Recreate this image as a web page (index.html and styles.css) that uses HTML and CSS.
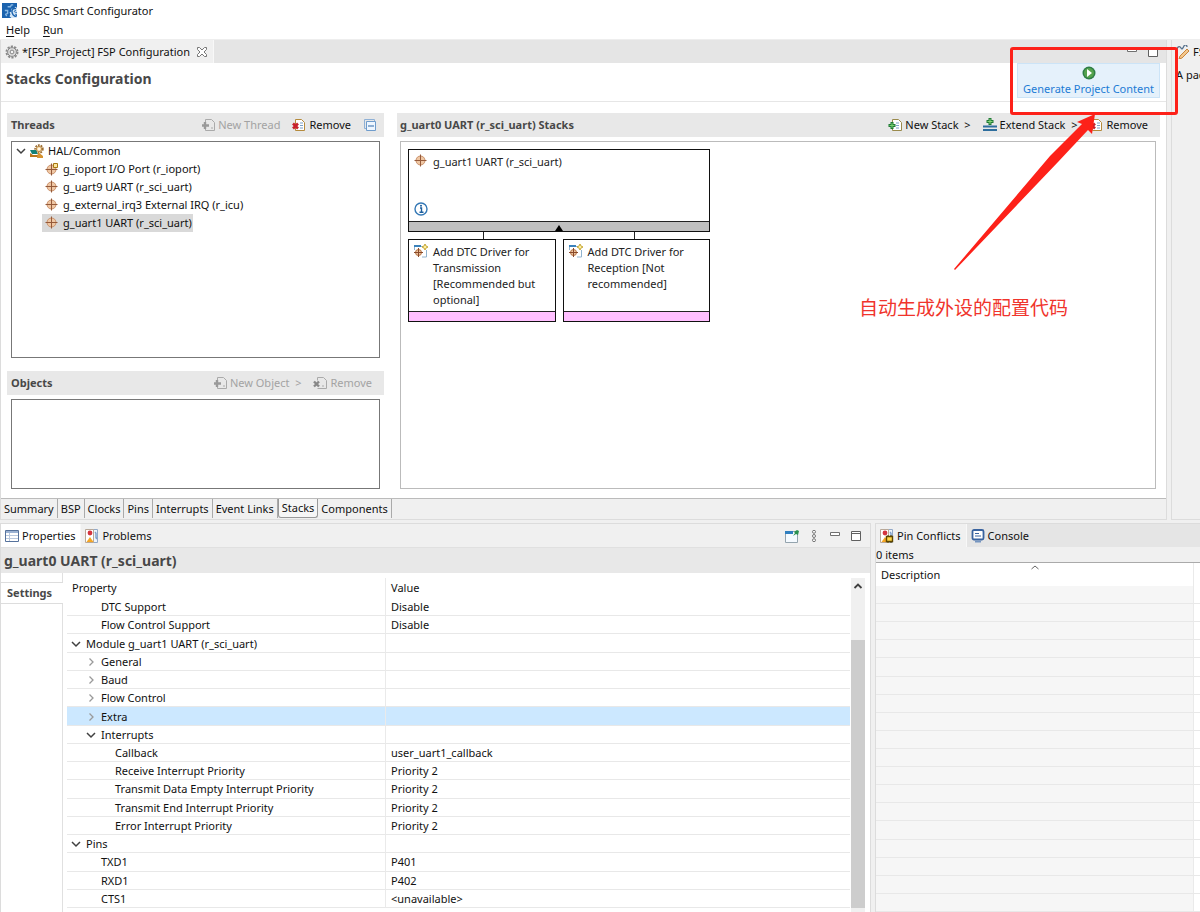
FILE: index.html
```
<!DOCTYPE html>
<html lang="en">
<head>
<meta charset="utf-8">
<title>DDSC Smart Configurator</title>
<link rel="stylesheet" href="styles.css">
</head>
<body>
<svg class="defs" aria-hidden="true">
  <symbol id="i-gear" viewBox="0 0 14 14"><circle cx="7" cy="7" r="5.6" fill="none" stroke="#888" stroke-width="1.8" stroke-dasharray="2.2 1.3"/><circle cx="7" cy="7" r="4.4" fill="#ddd" stroke="#858585"/><circle cx="7" cy="7" r="1.9" fill="#f4f4f4" stroke="#858585"/></symbol>
  <symbol id="i-module" viewBox="0 0 14 14"><circle cx="6.500" cy="6.500" r="4.500" fill="#efc7a4" stroke="#c99069"/><path d="M6.500 .5v12M.5 6.500h12" stroke="#955a3a"/></symbol>
  <symbol id="i-ioport" viewBox="0 0 14 14"><circle cx="6.500" cy="7.500" r="4.500" fill="#efc7a4" stroke="#c99069"/><path d="M6.500 1.500v12M.5 7.500h12" stroke="#955a3a"/><path d="M8.500 1.500h4v4h-4z" fill="#fbe7a0" stroke="#a87812"/></symbol>
  <symbol id="i-hal" viewBox="0 0 14 14"><circle cx="9" cy="5" r="3.900" fill="none" stroke="#9a6a2c" stroke-width="1.600" stroke-dasharray="1.800 1"/><circle cx="9" cy="5" r="2.700" fill="#f5dca8" stroke="#b98a4c"/><circle cx="9" cy="5" r="1" fill="#fff"/><path d="M0 6h6l2 4H2z" fill="#128076"/><path d="M0 9l3 2h9v2H0z" fill="#b8741b"/><path d="M8 8l5 4v2H7z" fill="#d69331"/></symbol>
  <symbol id="i-new" viewBox="0 0 14 14"><path d="M4.500 1.500h6l3 3v8h-9z" fill="#fff" stroke="currentColor"/><path d="M8 5h3M8 7.500h3M8 10h3" stroke="#7aa0c8"/><path d="M4 4v7M0.500 7.500h7" stroke="#1f7a35" stroke-width="3"/><path d="M4 5v5M1.500 7.500h5" stroke="#79cf70"/></symbol>
  <symbol id="i-remove" viewBox="0 0 14 14"><path d="M3.500 1.500h6l3 3v8h-9z" fill="#fff" stroke="#b58a3c"/><path d="M8 5h3M8 7.500h3M8 10h3" stroke="#7aa0c8"/><path d="M1 5.500l5 5M6 5.500l-5 5" stroke="#c8202c" stroke-width="2.600"/></symbol>
  <symbol id="i-new-off" viewBox="0 0 14 14"><path d="M4.500 4.500v-3h6l3 3v8h-9v-2" fill="none" stroke="#aaa"/><path d="M4 4v7M1 7.500h7" stroke="#999" stroke-width="2.400"/><path d="M10 10h2" stroke="#aaa"/></symbol>
  <symbol id="i-remove-off" viewBox="0 0 14 14"><path d="M4.500 4.500v-3h6l3 3v8h-9" fill="none" stroke="#aaa"/><path d="M1 5.500l5 5M6 5.500l-5 5" stroke="#888" stroke-width="2.400"/><path d="M9 10h2" stroke="#aaa"/></symbol>
  <symbol id="i-driver" viewBox="0 0 14 14"><path d="M1.500 2.500H9M12.500 6v7H8" fill="none" stroke="#90b3cf"/><path d="M0 1h7v2H0z" fill="#3b82bb"/><path d="M.5 3v3" stroke="#90b3cf"/><circle cx="4.500" cy="8.500" r="3" fill="#efc7a4" stroke="#b5703f"/><path d="M4.500 4v9M0 8.500h9" stroke="#8a4a2a"/><path d="M11 0l1 2 2 1-2 1-1 2-1-2-2-1 2-1z" fill="#fff0a0" stroke="#b99518" stroke-width=".8"/></symbol>
  <symbol id="i-min" viewBox="0 0 12 12"><path d="M1.500 2.500h9v3h-9z" fill="#fff" stroke="#707070"/></symbol>
  <symbol id="i-max" viewBox="0 0 12 12"><path d="M1.500 1.500h9v9h-9zM1.500 3.500h9" fill="#fff" stroke="#606060"/></symbol>
  <symbol id="i-down" viewBox="0 0 10 10"><path d="M1 3l4 4 4-4" fill="none" stroke="#404040" stroke-width="1.500"/></symbol>
  <symbol id="i-right" viewBox="0 0 10 10"><path d="M3.500 1.500L7 5 3.500 8.500" fill="none" stroke="#9a9a9a" stroke-width="1.300"/></symbol>
  <symbol id="i-problems" viewBox="0 0 14 14"><path d="M1.500.5h11v13h-11z" fill="#eef4fb" stroke="#92a9c8"/><path d="M.5.500h8v13h-8z" fill="#fff" stroke="#b8a898"/><circle cx="5" cy="4" r="2.400" fill="#d4343f"/><path d="M5 8l3.500 5h-7z" fill="#f5a623"/><path d="M10 3c3 2-1 4 2 7" fill="none" stroke="#7da0cd" stroke-width="1.500"/></symbol>
</svg>

<div class="app">
  <header class="titlebar">
    <svg class="icon logo" viewBox="0 0 16 16"><path d="M0 0h16v16H0z" fill="#1c63ae"/><path d="M16 0v5l-2-1-1 2-3 0 0 3-2 1 1 2-1 2 2 2h6z" fill="#d7e8f7"/><path d="M15 6c-4-1-5 2-4 5s4 4 5 2" fill="none" stroke="#1c63ae" stroke-width="1.500"/><path d="M15 8c-3 0-2 2 0 2s2 3-1 2" fill="none" stroke="#1c63ae"/><path d="M6 4h3l1-2h2M3 8h3v3l-2 1 1 2" fill="none" stroke="#8bb9e3" stroke-width="1.500"/></svg>
    <span>DDSC Smart Configurator</span>
  </header>
  <nav class="menubar"><button type="button"><span><u>H</u>elp</span></button><button type="button"><span><u>R</u>un</span></button></nav>

  <div class="upper">
    <section class="editor">
      <div class="tabstrip">
        <button type="button" class="tab file-tab"><svg class="icon"><use href="#i-gear"/></svg>*[FSP_Project] FSP Configuration
          <svg class="close" viewBox="0 0 12 12"><path d="M1.500 1.500h2L6 4l2.500-2.500h2v2L8 6l2.500 2.500v2h-2L6 8l-2.500 2.500h-2v-2L4 6 1.500 3.500z" fill="#fff" stroke="#777"/></svg></button>
        <div class="window-tools"><svg><use href="#i-min"/></svg><svg><use href="#i-max"/></svg></div>
      </div>
      <div class="form-head">
        <h1>Stacks Configuration</h1>
        <div class="generate-wrap">
          <button type="button" class="generate"><svg class="icon" viewBox="0 0 14 14"><circle cx="7" cy="7" r="6.500" fill="#2e7d46"/><circle cx="7" cy="7" r="5" fill="#56a34d"/><path d="M5 3l5 4-5 4z" fill="#fff"/></svg>Generate Project Content</button>
          <div class="callout"></div>
          <svg class="arrow" viewBox="0 0 142 156"><path d="M0 155L96 42 128 10l-5-2L141 0l-3 20-4-4L104 48 1 156z" fill="#fd2119"/></svg>
          <p class="note">自动生成外设的配置代码</p>
        </div>
      </div>
      <div class="form-body">
        <div class="left-col">
          <div class="section-bar"><h2>Threads</h2>
            <button type="button" disabled><svg class="icon"><use href="#i-new-off"/></svg>New Thread</button>
            <button type="button"><svg class="icon"><use href="#i-remove"/></svg>Remove</button>
            <button type="button" aria-label="Collapse all"><svg class="icon" viewBox="0 0 14 14"><path d="M3.500 10.500h-2v-9h10v2" fill="none" stroke="#8fb1d6"/><path d="M3.500 3.500h9v9h-9z" fill="#eef6ff" stroke="#6f9ccc"/><path d="M5 8h6" stroke="#2f69a8"/></svg></button>
          </div>
          <ul class="box tree">
            <li class="root"><svg class="chev"><use href="#i-down"/></svg><svg class="icon"><use href="#i-hal"/></svg><span>HAL/Common</span></li>
            <li><svg class="icon"><use href="#i-ioport"/></svg><span>g_ioport I/O Port (r_ioport)</span></li>
            <li><svg class="icon"><use href="#i-module"/></svg><span>g_uart9 UART (r_sci_uart)</span></li>
            <li><svg class="icon"><use href="#i-module"/></svg><span>g_external_irq3 External IRQ (r_icu)</span></li>
            <li class="selected"><svg class="icon"><use href="#i-module"/></svg><span>g_uart1 UART (r_sci_uart)</span></li>
          </ul>
          <div class="section-bar object-bar"><h2>Objects</h2>
            <button type="button" disabled><svg class="icon"><use href="#i-new-off"/></svg>New Object &nbsp;&gt;</button>
            <button type="button" disabled><svg class="icon"><use href="#i-remove-off"/></svg>Remove</button>
          </div>
          <div class="box objects"></div>
        </div>
        <div class="right-col">
          <div class="section-bar stack-bar"><h2>g_uart0 UART (r_sci_uart) Stacks</h2>
            <button type="button"><svg class="icon olive"><use href="#i-new"/></svg>New Stack &nbsp;&gt;</button>
            <button type="button"><svg class="icon" viewBox="0 0 14 14"><path d="M0 8.500h14M0 12h14" stroke="#2e6e9e" stroke-width="2"/><path d="M7 0v7M3.500 3.500h7" stroke="#1f7a35" stroke-width="3"/><path d="M7 1v5M4.500 3.500h5" stroke="#8ad67b"/></svg>Extend Stack &nbsp;&gt;</button>
            <button type="button"><svg class="icon"><use href="#i-remove"/></svg>Remove</button>
          </div>
          <div class="box canvas">
            <div class="diagram">
              <div class="node main">
                <div class="node-text"><svg class="icon"><use href="#i-module"/></svg><span>g_uart1 UART (r_sci_uart)</span></div>
                <svg class="icon info" viewBox="0 0 14 14"><circle cx="7" cy="7" r="6" fill="#fff" stroke="#3478b5" stroke-width="1.400"/><path d="M6 6h1.500v4M5.500 10.300h4" fill="none" stroke="#1d5e9c" stroke-width="1.400"/><circle cx="7" cy="3.700" r="1" fill="#1d5e9c"/></svg>
                <div class="node-foot grey"><svg viewBox="0 0 8 6"><path d="M4 0l4 6H0z"/></svg></div>
              </div>
              <div class="links"><i></i><i></i></div>
              <div class="children">
                <div class="node"><div class="node-text"><svg class="icon"><use href="#i-driver"/></svg><span>Add DTC Driver for Transmission [Recommended but optional]</span></div><div class="node-foot pink"></div></div>
                <div class="node"><div class="node-text"><svg class="icon"><use href="#i-driver"/></svg><span>Add DTC Driver for Reception [Not recommended]</span></div><div class="node-foot pink"></div></div>
              </div>
            </div>
          </div>
        </div>
      </div>
      <div class="page-tabs">
        <button type="button">Summary</button><button type="button">BSP</button><button type="button">Clocks</button><button type="button">Pins</button><button type="button">Interrupts</button><button type="button">Event Links</button><button type="button" class="on">Stacks</button><button type="button">Components</button>
      </div>
    </section>
    <aside class="visual">
      <div class="tabstrip"><button type="button" class="tab"><svg class="icon" viewBox="0 0 14 14"><path d="M1 4c1-3 3-3 4-1s2 0 3-2 3-1 3 1" fill="none" stroke="#55708c" stroke-width="1.300"/><path d="M11 4l2 2-7 7-3 1 1-3z" fill="#f3c78d" stroke="#c8843c"/></svg>FSP Visualization</button></div>
      <p>A package is not selected</p>
    </aside>
  </div>

  <div class="lower">
    <section class="props">
      <div class="tabstrip light">
        <button type="button" class="tab white"><svg class="icon" viewBox="0 0 14 14"><path d="M.5 1.500h13v11H.5z" fill="#fff" stroke="#56729c"/><path d="M1 2h12v2H1z" fill="#9bb2d3"/><path d="M4.500 4v8M1 6.500h12M1 9.500h12" stroke="#b9c8de"/></svg>Properties</button>
        <button type="button" class="tab plain"><svg class="icon"><use href="#i-problems"/></svg>Problems</button>
        <div class="window-tools wide">
          <svg class="icon" viewBox="0 0 14 14"><path d="M.5 2.500h12v11H.5z" fill="#f5faff" stroke="#94a4ae"/><path d="M0 2h8v3H0z" fill="#2f7fc0"/><path d="M8 7l2-3-1-1 3-2 2 1-1 4-2-1z" fill="#2a9150"/></svg>
          <svg viewBox="0 0 12 12"><g fill="#fff" stroke="#777"><circle cx="6" cy="1.800" r="1.500"/><circle cx="6" cy="6" r="1.500"/><circle cx="6" cy="10.200" r="1.500"/></g></svg>
          <svg><use href="#i-min"/></svg><svg><use href="#i-max"/></svg>
        </div>
      </div>
      <h2 class="props-title">g_uart0 UART (r_sci_uart)</h2>
      <div class="props-body">
        <div class="side"><button type="button">Settings</button></div>
        <div class="table-wrap">
          <table class="grid">
            <thead><tr><th>Property</th><th>Value</th></tr></thead>
            <tbody>
              <tr><td class="d2">DTC Support</td><td>Disable</td></tr>
              <tr><td class="d2">Flow Control Support</td><td>Disable</td></tr>
              <tr><td class="d1"><svg class="chev"><use href="#i-down"/></svg>Module g_uart1 UART (r_sci_uart)</td><td></td></tr>
              <tr><td class="d2"><svg class="chev"><use href="#i-right"/></svg>General</td><td></td></tr>
              <tr><td class="d2"><svg class="chev"><use href="#i-right"/></svg>Baud</td><td></td></tr>
              <tr><td class="d2"><svg class="chev"><use href="#i-right"/></svg>Flow Control</td><td></td></tr>
              <tr class="selected"><td class="d2"><svg class="chev"><use href="#i-right"/></svg>Extra</td><td></td></tr>
              <tr><td class="d2"><svg class="chev"><use href="#i-down"/></svg>Interrupts</td><td></td></tr>
              <tr><td class="d3">Callback</td><td>user_uart1_callback</td></tr>
              <tr><td class="d3">Receive Interrupt Priority</td><td>Priority 2</td></tr>
              <tr><td class="d3">Transmit Data Empty Interrupt Priority</td><td>Priority 2</td></tr>
              <tr><td class="d3">Transmit End Interrupt Priority</td><td>Priority 2</td></tr>
              <tr><td class="d3">Error Interrupt Priority</td><td>Priority 2</td></tr>
              <tr><td class="d1"><svg class="chev"><use href="#i-down"/></svg>Pins</td><td></td></tr>
              <tr><td class="d2">TXD1</td><td>P401</td></tr>
              <tr><td class="d2">RXD1</td><td>P402</td></tr>
              <tr><td class="d2">CTS1</td><td>&lt;unavailable&gt;</td></tr>
            </tbody>
          </table>
          <div class="scroll"><svg class="chev" viewBox="0 0 10 10"><path d="M1.500 7L5 3.500 8.500 7" fill="none" stroke="#404040" stroke-width="1.800"/></svg><div class="thumb"></div></div>
        </div>
      </div>
    </section>
    <section class="conflicts">
      <div class="tabstrip">
        <button type="button" class="tab"><svg class="icon" viewBox="0 0 14 14"><use href="#i-problems"/><path d="M6.500 7.500h6v5h-6z" fill="#ffd84a" stroke="#5d4500" stroke-width="1.400"/><path d="M8 6v1M11 6v1M8 13v1M11 13v1" stroke="#5d4500"/></svg>Pin Conflicts</button>
        <button type="button" class="tab plain"><svg class="icon" viewBox="0 0 14 14"><rect x="1.500" y="1" width="11" height="9.500" rx="1.500" fill="#fff" stroke="#39639f" stroke-width="1.800"/><path d="M4 4.500h4M4 7h6" stroke="#39639f"/><path d="M4 12.500h6" stroke="#7595c0" stroke-width="2"/></svg>Console</button>
      </div>
      <p class="count">0 items</p>
      <table class="grid empty">
        <thead><tr><th>Description<svg class="chev sort" viewBox="0 0 10 10"><path d="M1.500 6L5 3l3.500 3" fill="none" stroke="#666"/></svg></th><th></th></tr></thead>
        <tbody>
          <tr><td></td><td></td></tr><tr><td></td><td></td></tr><tr><td></td><td></td></tr><tr><td></td><td></td></tr><tr><td></td><td></td></tr><tr><td></td><td></td></tr>
          <tr><td></td><td></td></tr><tr><td></td><td></td></tr><tr><td></td><td></td></tr><tr><td></td><td></td></tr><tr><td></td><td></td></tr><tr><td></td><td></td></tr>
          <tr><td></td><td></td></tr><tr><td></td><td></td></tr><tr><td></td><td></td></tr><tr><td></td><td></td></tr><tr><td></td><td></td></tr><tr><td></td><td></td></tr>
        </tbody>
      </table>
    </section>
  </div>
</div>
</body>
</html>
```
FILE: styles.css
```
* { box-sizing: border-box; }
body { margin: 0; background: #f0f0f0; color: #111; font: 11px/18px "Noto Sans", "Noto Sans CJK SC", sans-serif; }
button { border: 0; margin: 0; padding: 0; background: none; color: inherit; font: inherit; white-space: nowrap; display: flex; align-items: center; gap: 3px; }
h1, h2, p, ul { margin: 0; padding: 0; }
svg { display: block; flex: none; }
.defs { position: absolute; width: 0; height: 0; }
.icon { width: 14px; height: 14px; }
.chev { width: 10px; height: 10px; }
.olive { color: #9a8a4c; }
.app { height: 100vh; display: flex; flex-direction: column; overflow: hidden; }

.titlebar { background: #fff; height: 21px; display: flex; align-items: center; gap: 4px; padding-left: 2px; }
.logo { width: 15px; height: 15px; }
.menubar { background: #fff; height: 19px; display: flex; gap: 13px; padding-left: 6px; border-bottom: 1px solid #eee; }
u { text-underline-offset: 2px; }

.upper { display: flex; flex: none; height: 480px; }
.editor { flex: 1; min-width: 0; display: flex; flex-direction: column; border: 1px solid #dcdcdc; border-top: 0; }
.tabstrip { height: 23px; flex: none; display: flex; background: #e5e5e5; }
.tab { background: #f0f0f0; padding: 0 5px 0 4px; height: 100%; border-right: 1px solid #f8f8f8; }
.plain { background: none; border: 0; }
.white { background: #fff; }
.light { background: #f0f0f0; height: 24px; border-bottom: 1px solid #e0e0e0; }
.close { width: 12px; height: 12px; margin-left: 3px; }
.window-tools { margin-left: auto; display: flex; align-items: center; gap: 9px; padding-right: 7px; }
.window-tools svg:not(.icon) { width: 12px; height: 12px; }
.wide { padding-right: 8px; }

.form-head { background: #fff; height: 39px; flex: none; display: flex; justify-content: space-between; border-bottom: 1px solid #e6e6e6; padding: 0 6px 0 5px; }
h1 { font-size: 14px; line-height: 31px; color: #484848; }
.generate-wrap { position: relative; }
.generate { flex-direction: column; gap: 0; height: 35px; padding: 2px 5px 0; background: #e5f1fb; border: 1px solid #cce4f7; color: #1c7cd5; }
.callout { position: absolute; left: -7px; top: -16px; right: -18px; height: 68px; border: 3px solid #fd2119; border-radius: 3px; z-index: 2; }
.arrow { position: absolute; right: 64px; top: 51px; width: 142px; height: 156px; z-index: 2; }
.note { position: absolute; right: 92px; top: 230px; color: #f0342c; font: 19px/28px "Noto Sans CJK SC", sans-serif; white-space: nowrap; z-index: 2; }

.form-body { flex: 1; background: #fff; display: flex; gap: 13px; padding: 11px 6px 9px; min-height: 0; }
.left-col { width: 377px; flex: none; display: flex; flex-direction: column; }
.right-col { flex: 1; display: flex; flex-direction: column; }
.section-bar { background: #e8e8e8; height: 24px; flex: none; display: flex; align-items: center; gap: 12px; padding: 0 7px 0 4px; margin-bottom: 4px; }
.section-bar h2 { font-size: 11px; color: #484848; margin-right: auto; }
.section-bar button:disabled { color: #a3a3a3; }
.stack-bar { padding: 0 12px 0 3px; }
.object-bar { padding-right: 12px; }
.box { border: 1px solid #777; background: #fff; margin: 0 4px; }
.tree { list-style: none; height: 217px; margin-bottom: 13px; }
.tree li { display: flex; align-items: center; gap: 4px; height: 18px; width: max-content; padding: 0 1px 0 3px; margin-left: 30px; }
.tree .root { margin-left: 1px; }
.selected { background: #d9d9d9; }
.objects { flex: 1; }
.canvas { flex: 1; border-color: #bbb; padding: 7px; margin: 0 4px 0 3px; }

.diagram { width: 302px; color: #222; }
.node { border: 1px solid #111; display: flex; flex-direction: column; justify-content: space-between; }
.main { height: 83px; }
.node-text { display: flex; gap: 5px; padding: 4px 5px 0; line-height: 16px; }
.info { margin: auto 5px 5px; }
.node-foot { height: 10px; border-top: 1px solid #222; display: flex; justify-content: center; align-items: flex-end; }
.node-foot svg { width: 8px; height: 6px; }
.grey { background: #c0c0c0; }
.pink { background: #ffbfff; }
.links { height: 7px; display: flex; justify-content: space-around; }
.links i { width: 1px; background: #222; }
.children { display: grid; grid-template-columns: 1fr 1fr; gap: 7px; }
.children .node { height: 83px; }

.page-tabs { height: 21px; flex: none; display: flex; border-top: 1px solid #bbb; }
.page-tabs button { padding: 0 3px; border-right: 1px solid #aaa; height: 19px; }
.page-tabs .on { border: 1px solid #999; border-top: 0; border-radius: 0 0 3px 3px; background: #f6f6f6; }

.visual { width: 29px; margin-left: 4px; flex: none; border: 1px solid #dcdcdc; border-width: 0 0 1px 1px; overflow: hidden; white-space: nowrap; }
.visual p { padding: 3px 4px; }

.lower { flex: 1; min-height: 0; display: flex; gap: 4px; margin-top: 3px; }
.props { flex: 1; min-width: 0; border: 1px solid #dcdcdc; border-bottom: 0; display: flex; flex-direction: column; background: #fff; }
.props-title { background: #e8e8e8; font-size: 14px; line-height: 25px; height: 25px; flex: none; padding-left: 3px; color: #484848; }
.props-body { flex: 1; display: flex; min-height: 0; }
.side { width: 62px; flex: none; border-right: 1px solid #e0e0e0; padding-top: 9px; }
.side button { width: 62px; height: 22px; background: #fff; border: 1px solid #ddd; border-width: 1px 0; padding-left: 6px; font-weight: bold; color: #484848; }
.table-wrap { flex: 1; display: flex; padding: 5px 5px 0 4px; gap: 1px; overflow: hidden; }
.grid { flex: 1; border-collapse: separate; border-spacing: 0; table-layout: fixed; margin-bottom: 4px; }
.grid th { font-weight: normal; text-align: left; height: 20px; padding: 0 5px; }
.grid th:first-child { width: 319px; }
.grid th, .grid td { border-right: 1px solid #eaeaea; }
.grid th:last-child, .grid td:last-child { border-right: 0; }
.grid td { line-height: 17px; padding: 0 5px; border-bottom: 1px solid #e8e8e8; white-space: nowrap; }
.grid td .chev { display: inline-block; margin: 0 5px 0 -15px; vertical-align: -1px; }
.grid .d1 { padding-left: 19px; }
.grid .d2 { padding-left: 34px; }
.grid .d3 { padding-left: 48px; }
.grid .selected td { background: #cce8ff; }
.scroll { width: 14px; background: #f0f0f0; display: flex; flex-direction: column; align-items: center; padding-top: 3px; }
.thumb { width: 14px; flex: 1; background: #cdcdcd; margin: 49px 0 4px; }

.conflicts { width: 325px; flex: none; border: 1px solid #dcdcdc; border-width: 1px 0 0 1px; display: flex; flex-direction: column; overflow: hidden; }
.count { line-height: 15px; flex: none; }
.empty { width: 100%; margin: 0; border-top: 1px solid #aaa; background: #fff; }
.empty th:first-child { width: 318px; position: relative; }
.sort { position: absolute; left: 154px; top: 0; }
.empty th { height: 23px; }
.empty td:first-child { background: #f6f6f6; }
```
